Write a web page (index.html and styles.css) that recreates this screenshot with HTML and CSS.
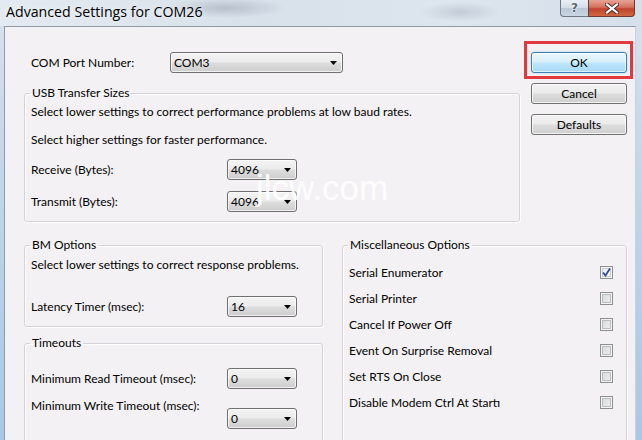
FILE: index.html
```html
<!DOCTYPE html>
<html>
<head>
<meta charset="utf-8">
<link rel="stylesheet" href="styles.css">
</head>
<body>
<div class="window">
  <div class="titlebar">
    <span class="title">Advanced Settings for COM26</span>
    <div class="caption">
      <div class="cap help">?</div>
      <div class="cap close">
        <svg width="14" height="11" viewBox="0 0 14 11"><path d="M2 1.5 L12 9.5 M12 1.5 L2 9.5" stroke="#4a2a2a" stroke-width="4" stroke-linecap="square"/><path d="M2 1.5 L12 9.5 M12 1.5 L2 9.5" stroke="#fff" stroke-width="2.2" stroke-linecap="square"/></svg>
      </div>
    </div>
  </div>
  <div class="frame">
    <div class="client">
      <div class="top">
        <div class="top-left">
          <div class="com-row">
            <span class="com-label">COM Port Number:</span>
            <div class="combo wide"><span>COM3</span><svg class="arrow" width="7" height="4" viewBox="0 0 7 4"><polygon points="0,0 7,0 3.5,4" fill="#000"/></svg></div>
          </div>
          <fieldset class="group usb">
            <legend>USB Transfer Sizes</legend>
            <p class="line">Select lower settings to correct performance problems at low baud rates.</p>
            <p class="line second">Select higher settings for faster performance.</p>
            <div class="row first-row">
              <span class="row-label">Receive (Bytes):</span>
              <div class="combo small"><span>4096</span><svg class="arrow" width="7" height="4" viewBox="0 0 7 4"><polygon points="0,0 7,0 3.5,4" fill="#000"/></svg></div>
            </div>
            <div class="row next-row">
              <span class="row-label">Transmit (Bytes):</span>
              <div class="combo small"><span>4096</span><svg class="arrow" width="7" height="4" viewBox="0 0 7 4"><polygon points="0,0 7,0 3.5,4" fill="#000"/></svg></div>
            </div>
          </fieldset>
        </div>
        <div class="buttons">
          <div class="focus-ring"><div class="btn ok">OK</div></div>
          <div class="btn cancel">Cancel</div>
          <div class="btn defaults">Defaults</div>
        </div>
      </div>
      <div class="bottom">
        <div class="bottom-left">
          <fieldset class="group bm">
            <legend>BM Options</legend>
            <p class="line">Select lower settings to correct response problems.</p>
            <div class="row latency-row">
              <span class="row-label">Latency Timer (msec):</span>
              <div class="combo small"><span>16</span><svg class="arrow" width="7" height="4" viewBox="0 0 7 4"><polygon points="0,0 7,0 3.5,4" fill="#000"/></svg></div>
            </div>
          </fieldset>
          <fieldset class="group timeouts">
            <legend>Timeouts</legend>
            <div class="row">
              <span class="row-label">Minimum Read Timeout (msec):</span>
              <div class="combo small"><span>0</span><svg class="arrow" width="7" height="4" viewBox="0 0 7 4"><polygon points="0,0 7,0 3.5,4" fill="#000"/></svg></div>
            </div>
            <div class="row write-row">
              <span class="row-label">Minimum Write Timeout (msec):</span>
              <div class="combo small"><span>0</span><svg class="arrow" width="7" height="4" viewBox="0 0 7 4"><polygon points="0,0 7,0 3.5,4" fill="#000"/></svg></div>
            </div>
          </fieldset>
        </div>
        <fieldset class="group misc">
          <legend>Miscellaneous Options</legend>
          <div class="opt"><span>Serial Enumerator</span><span class="cb checked"><svg width="11" height="11" viewBox="0 0 11 11"><path d="M2 5.5 L4.5 8.5 L9 1.5" fill="none" stroke="#2d4d8e" stroke-width="1.8"/></svg></span></div>
          <div class="opt"><span>Serial Printer</span><span class="cb"></span></div>
          <div class="opt"><span>Cancel If Power Off</span><span class="cb"></span></div>
          <div class="opt"><span>Event On Surprise Removal</span><span class="cb"></span></div>
          <div class="opt"><span>Set RTS On Close</span><span class="cb"></span></div>
          <div class="opt"><span>Disable Modem Ctrl At Startı</span><span class="cb"></span></div>
        </fieldset>
      </div>
    </div>
  </div>
  <div class="watermark">jlcw.com</div>
</div>
</body>
</html>
```
FILE: styles.css
```css
html, body {
  margin: 0;
  padding: 0;
}
body {
  width: 642px;
  height: 440px;
  overflow: hidden;
  font-family: "Lato", "Open Sans", sans-serif;
  font-size: 12px;
  color: #000;
}
.window {
  position: relative;
  width: 642px;
  height: 440px;
  overflow: hidden;
  display: flex;
  flex-direction: column;
  background: linear-gradient(to bottom, #d9e3ed 0px, #c9d9ea 120px, #a9c7e6 440px);
}
.titlebar {
  height: 26px;
  flex: none;
  display: flex;
  align-items: flex-start;
  background:
    radial-gradient(ellipse 60px 10px at 225px 8px, rgba(120,130,145,0.35), rgba(120,130,145,0) 100%),
    radial-gradient(ellipse 40px 10px at 460px 12px, rgba(120,130,145,0.25), rgba(120,130,145,0) 100%),
    linear-gradient(to right, #e4eaf1 0%, #d8e1ea 40%, #dde5ee 70%, #d6e0ea 100%);
}
.title {
  margin: 4px 0 0 6px;
  font-family: "Open Sans", sans-serif;
  font-size: 14.2px;
  line-height: 16px;
  color: #000;
  text-shadow: 0 0 6px rgba(255,255,255,0.9);
}
.caption {
  margin-left: auto;
  margin-right: 7px;
  display: flex;
  height: 17px;
}
.cap {
  height: 17px;
  box-sizing: border-box;
  display: flex;
  align-items: center;
  justify-content: center;
}
.help {
  width: 28px;
  border: 1px solid #6d7886;
  border-right: none;
  border-top: none;
  border-bottom-left-radius: 4px;
  background: linear-gradient(to bottom, #e9eef4 0%, #d3dce7 50%, #b9c7d7 51%, #c9d6e4 100%);
  font-family: "DejaVu Sans", sans-serif;
  font-size: 12px;
  font-weight: bold;
  color: #5a6675;
  text-shadow: 0 0 2px #fff, 0 0 2px #fff;
}
.close {
  width: 47px;
  border: 1px solid #6d3a36;
  border-top: none;
  border-bottom-right-radius: 4px;
  background: linear-gradient(to bottom, #e8a493 0%, #d2705c 45%, #c1432f 55%, #d0683f 100%);
}
.frame {
  flex: 1;
  display: flex;
  padding: 0 6px 0 4px;
  min-height: 0;
}
.client {
  flex: 1;
  background: #f3f1f3;
  border-top: 1px solid #8e9aa8;
  border-left: 1px solid #8e9aa8;
  border-right: 1px solid #c2d2e2;
  padding: 14px 0 0 19px;
  display: flex;
  flex-direction: column;
}
.top {
  display: grid;
  grid-template-columns: 496px 109px;
  column-gap: 4px;
  align-items: start;
}
.com-row {
  display: flex;
  align-items: center;
  height: 21px;
  margin-top: 11px;
  padding-left: 7px;
}
.com-label {
  width: 139px;
}
.combo {
  height: 21px;
  box-sizing: border-box;
  border: 1px solid #707070;
  border-radius: 3px;
  background: linear-gradient(to bottom, #f4f4f4 0%, #ececec 45%, #dcdcdc 55%, #cdcdcd 100%);
  box-shadow: inset 0 0 0 1px rgba(255,255,255,0.7);
  display: flex;
  align-items: center;
  padding-left: 3px;
  flex: none;
}
.combo .arrow {
  margin-left: auto;
  margin-right: 5px;
}
.combo.wide {
  width: 173px;
}
.combo.small {
  width: 70px;
}
fieldset.group {
  margin: 0;
  min-width: 0;
  border: 1px solid #d5d3d8;
  border-radius: 3px;
  box-shadow: inset 1px 1px 0 #ffffff, 1px 1px 0 #ffffff;
}
fieldset.group legend {
  padding: 0 2px;
  margin-left: -1px;
  line-height: 16px;
}
.line {
  margin: 0;
  line-height: 16px;
}
.usb {
  margin-top: 12px !important;
  padding: 3px 0 9px 6px;
}
.usb .second {
  margin-top: 12px;
}
.row {
  display: flex;
  align-items: center;
  height: 21px;
}
.row-label {
  width: 196px;
  flex: none;
}
.first-row {
  margin-top: 11px;
}
.next-row {
  margin-top: 11px;
}
.buttons {
  display: flex;
  flex-direction: column;
}
.focus-ring {
  border: 3px solid #e0393e;
  padding: 8px 3px 3px 4px;
}
.btn {
  width: 96px;
  height: 21px;
  box-sizing: border-box;
  border: 1px solid #707070;
  border-radius: 3px;
  background: linear-gradient(to bottom, #f2f2f2 0%, #ebebeb 48%, #dddddd 52%, #cfcfcf 100%);
  box-shadow: inset 0 0 0 1px rgba(255,255,255,0.75);
  display: flex;
  align-items: center;
  justify-content: center;
  line-height: 16px;
}
.btn.ok {
  border-color: #3c7fb1;
  background: linear-gradient(to bottom, #eaf6fd 0%, #d9f0fc 48%, #bee6fd 52%, #a7d9f5 100%);
  box-shadow: inset 0 0 0 1px rgba(255,255,255,0.6), 0 0 2px #8fd0ef;
}
.btn.cancel {
  margin: 4px 0 0 7px;
}
.btn.defaults {
  margin: 10px 0 0 7px;
}
.bottom {
  display: grid;
  grid-template-columns: 299px 285px;
  column-gap: 19px;
  margin-top: 15px;
  align-items: start;
}
.bottom-left {
  display: flex;
  flex-direction: column;
}
.bm {
  padding: 4px 0 9px 6px;
}
.latency-row {
  margin-top: 23px;
}
.timeouts {
  margin-top: 8px !important;
  padding: 17px 0 0 6px;
  height: 140px;
}
.write-row {
  margin-top: 9px;
  align-items: flex-start;
  height: auto;
}
.write-row .row-label {
  line-height: 16px;
}
.write-row .combo {
  margin-top: 10px;
}
.misc {
  padding: 6px 13px 0 6px;
  height: 240px;
}
.opt {
  height: 26px;
  display: flex;
  align-items: center;
  justify-content: space-between;
}
.cb {
  width: 13px;
  height: 13px;
  box-sizing: border-box;
  border: 1px solid #8e8f8f;
  background: linear-gradient(to bottom right, #d4d6d9 0%, #f2f2f2 100%);
  box-shadow: inset 0 0 0 1px #f4f4f4, inset 0 0 0 2px #b9bcc0;
  display: flex;
  align-items: center;
  justify-content: center;
}
.cb.checked {
  background: linear-gradient(to bottom right, #e9ebee 0%, #fbfbfb 100%);
  box-shadow: inset 0 0 0 1px #f4f4f4, inset 0 0 0 2px #c9ccd0;
}
.watermark {
  position: absolute;
  left: 256px;
  top: 170px;
  font-family: "Liberation Sans", Arial, sans-serif;
  font-size: 35px;
  line-height: 35px;
  color: rgba(255,255,255,0.92);
  pointer-events: none;
}
```
